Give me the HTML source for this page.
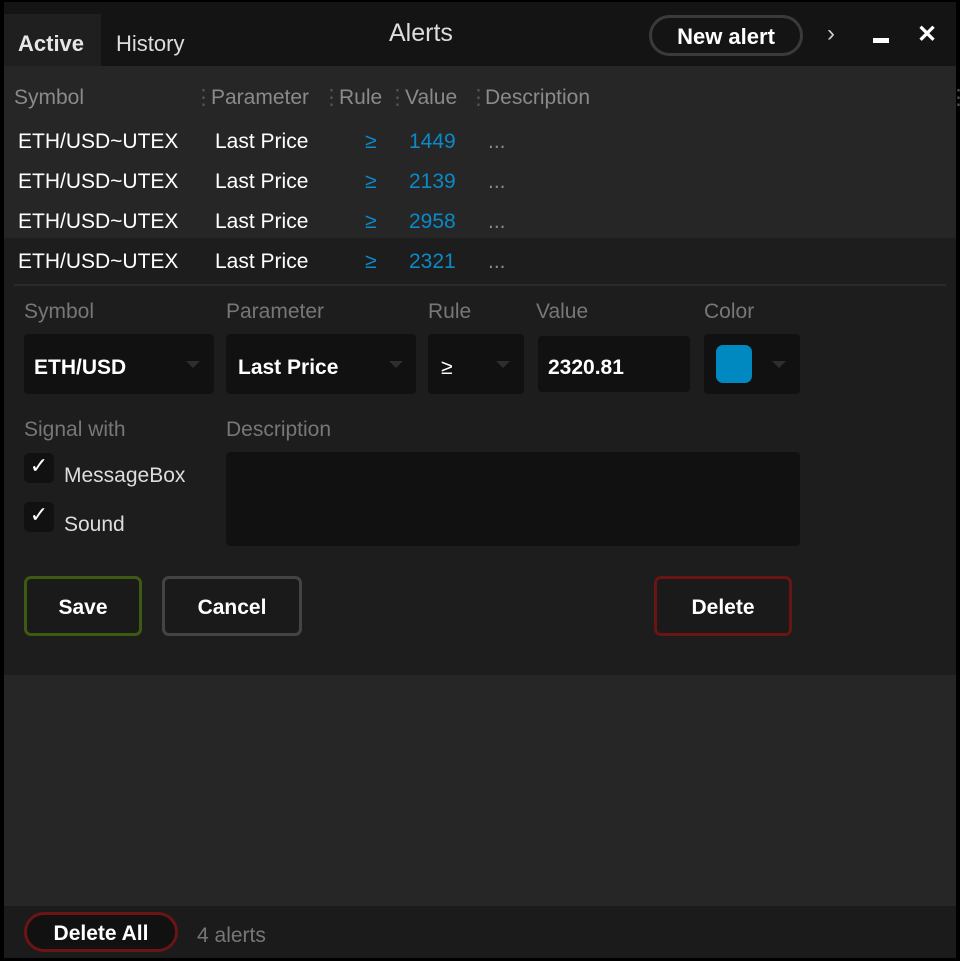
<!DOCTYPE html>
<html><head><meta charset="utf-8"><style>
*{margin:0;padding:0;box-sizing:border-box}
body{width:960px;height:961px;background:#000;position:relative;overflow:hidden;font-family:"Liberation Sans",sans-serif;color:#fff}
.a{position:absolute;white-space:nowrap}
.t{font-size:21px;line-height:26px;margin-top:2px}
.g{color:#8a8a8a}
.d{color:#555}
.b{color:#0a8ac8}
.box{position:absolute;background:#111;border-radius:4px}
.arr{position:absolute;width:0;height:0;border-left:7px solid transparent;border-right:7px solid transparent;border-top:7px solid #2e2e2e}
.btn{position:absolute;border:3px solid;border-radius:7px;background:#1a1a1a;font-weight:bold;font-size:21px;text-align:center}
.chk{position:absolute;width:30px;height:30px;background:#111;border-radius:5px;font-size:22px;line-height:26px;text-align:center}
</style></head><body>
<div class="a" style="left:4px;top:2px;width:952px;height:64px;background:#141414"></div>
<div class="a" style="left:4px;top:14px;width:97px;height:52px;background:#1f1f1f"></div>
<div class="a t" style="left:18px;top:29px;font-weight:bold;color:#e6e6e6;font-size:22px">Active</div>
<div class="a t" style="left:116px;top:29px;color:#ddd;font-size:22px">History</div>
<div class="a" style="left:389px;top:18px;font-size:25px;line-height:30px;color:#ddd">Alerts</div>
<div class="a" style="left:649px;top:15px;width:154px;height:41px;border:3px solid #3a3a3a;border-radius:21px;font-size:22px;line-height:37px;text-align:center;font-weight:bold">New alert</div>
<div class="a" style="left:827px;top:20px;font-size:24px;color:#ccc">›</div>
<div class="a" style="left:873px;top:38px;width:16px;height:5px;background:#fff"></div>
<div class="a" style="left:917px;top:21px;font-size:24px;line-height:28px;font-weight:bold">✕</div>

<div class="a" style="left:4px;top:66px;width:952px;height:172px;background:#262626"></div>
<div class="a" style="left:4px;top:238px;width:952px;height:42px;background:#1d1d1d"></div>
<div class="a t g" style="left:14px;top:83px">Symbol</div>
<div class="a t d" style="left:193px;top:83px">⋮</div>
<div class="a t g" style="left:211px;top:83px">Parameter</div>
<div class="a t d" style="left:321px;top:83px">⋮</div>
<div class="a t g" style="left:339px;top:83px">Rule</div>
<div class="a t d" style="left:387px;top:83px">⋮</div>
<div class="a t g" style="left:405px;top:83px">Value</div>
<div class="a t d" style="left:468px;top:83px">⋮</div>
<div class="a t g" style="left:485px;top:83px">Description</div>
<div class="a t d" style="left:948px;top:83px">⋮</div>

<div class="a t" style="left:18px;top:127px">ETH/USD~UTEX</div><div class="a t" style="left:215px;top:127px">Last Price</div><div class="a t b" style="left:365px;top:127px">≥</div><div class="a t b" style="left:409px;top:127px">1449</div><div class="a t g" style="left:488px;top:127px">...</div>
<div class="a t" style="left:18px;top:167px">ETH/USD~UTEX</div><div class="a t" style="left:215px;top:167px">Last Price</div><div class="a t b" style="left:365px;top:167px">≥</div><div class="a t b" style="left:409px;top:167px">2139</div><div class="a t g" style="left:488px;top:167px">...</div>
<div class="a t" style="left:18px;top:207px">ETH/USD~UTEX</div><div class="a t" style="left:215px;top:207px">Last Price</div><div class="a t b" style="left:365px;top:207px">≥</div><div class="a t b" style="left:409px;top:207px">2958</div><div class="a t g" style="left:488px;top:207px">...</div>
<div class="a t" style="left:18px;top:247px">ETH/USD~UTEX</div><div class="a t" style="left:215px;top:247px">Last Price</div><div class="a t b" style="left:365px;top:247px">≥</div><div class="a t b" style="left:409px;top:247px">2321</div><div class="a t g" style="left:488px;top:247px">...</div>

<div class="a" style="left:4px;top:280px;width:952px;height:395px;background:#1d1d1d"></div>
<div class="a" style="left:14px;top:284px;width:932px;height:2px;background:#2a2a2a"></div>
<div class="a t" style="left:24px;top:297px;color:#777">Symbol</div>
<div class="a t" style="left:226px;top:297px;color:#777">Parameter</div>
<div class="a t" style="left:428px;top:297px;color:#777">Rule</div>
<div class="a t" style="left:536px;top:297px;color:#777">Value</div>
<div class="a t" style="left:704px;top:297px;color:#777">Color</div>

<div class="box" style="left:24px;top:334px;width:190px;height:60px"></div>
<div class="a t" style="left:34px;top:353px;font-weight:bold">ETH/USD</div><div class="arr" style="left:186px;top:361px"></div>
<div class="box" style="left:226px;top:334px;width:190px;height:60px"></div>
<div class="a t" style="left:238px;top:353px;font-weight:bold">Last Price</div><div class="arr" style="left:389px;top:361px"></div>
<div class="box" style="left:428px;top:334px;width:96px;height:60px"></div>
<div class="a t" style="left:441px;top:353px">≥</div><div class="arr" style="left:496px;top:361px"></div>
<div class="box" style="left:538px;top:336px;width:152px;height:56px"></div>
<div class="a t" style="left:548px;top:353px;font-weight:bold">2320.81</div>
<div class="box" style="left:704px;top:334px;width:96px;height:60px"></div>
<div class="a" style="left:716px;top:345px;width:36px;height:38px;background:#0088c0;border-radius:7px"></div><div class="arr" style="left:772px;top:361px"></div>

<div class="a t" style="left:24px;top:415px;color:#777">Signal with</div>
<div class="a t" style="left:226px;top:415px;color:#777">Description</div>
<div class="chk" style="left:24px;top:453px">✓</div><div class="a t" style="left:64px;top:461px;color:#ddd">MessageBox</div>
<div class="chk" style="left:24px;top:502px">✓</div><div class="a t" style="left:64px;top:510px;color:#ddd">Sound</div>
<div class="box" style="left:226px;top:452px;width:574px;height:94px"></div>

<div class="btn" style="left:24px;top:576px;width:118px;height:60px;border-color:#3e5a12;line-height:58px">Save</div>
<div class="btn" style="left:162px;top:576px;width:140px;height:60px;border-color:#444;line-height:58px">Cancel</div>
<div class="btn" style="left:654px;top:576px;width:138px;height:60px;border-color:#6a1414;line-height:58px">Delete</div>

<div class="a" style="left:4px;top:675px;width:952px;height:231px;background:#262626"></div>
<div class="a" style="left:4px;top:906px;width:952px;height:52px;background:#1b1b1b"></div>
<div class="a" style="left:24px;top:912px;width:154px;height:40px;border:3px solid #6a1414;border-radius:20px;background:#111;font-weight:bold;font-size:21px;line-height:38px;text-align:center">Delete All</div>
<div class="a t" style="left:197px;top:921px;color:#777">4 alerts</div>
</body></html>
